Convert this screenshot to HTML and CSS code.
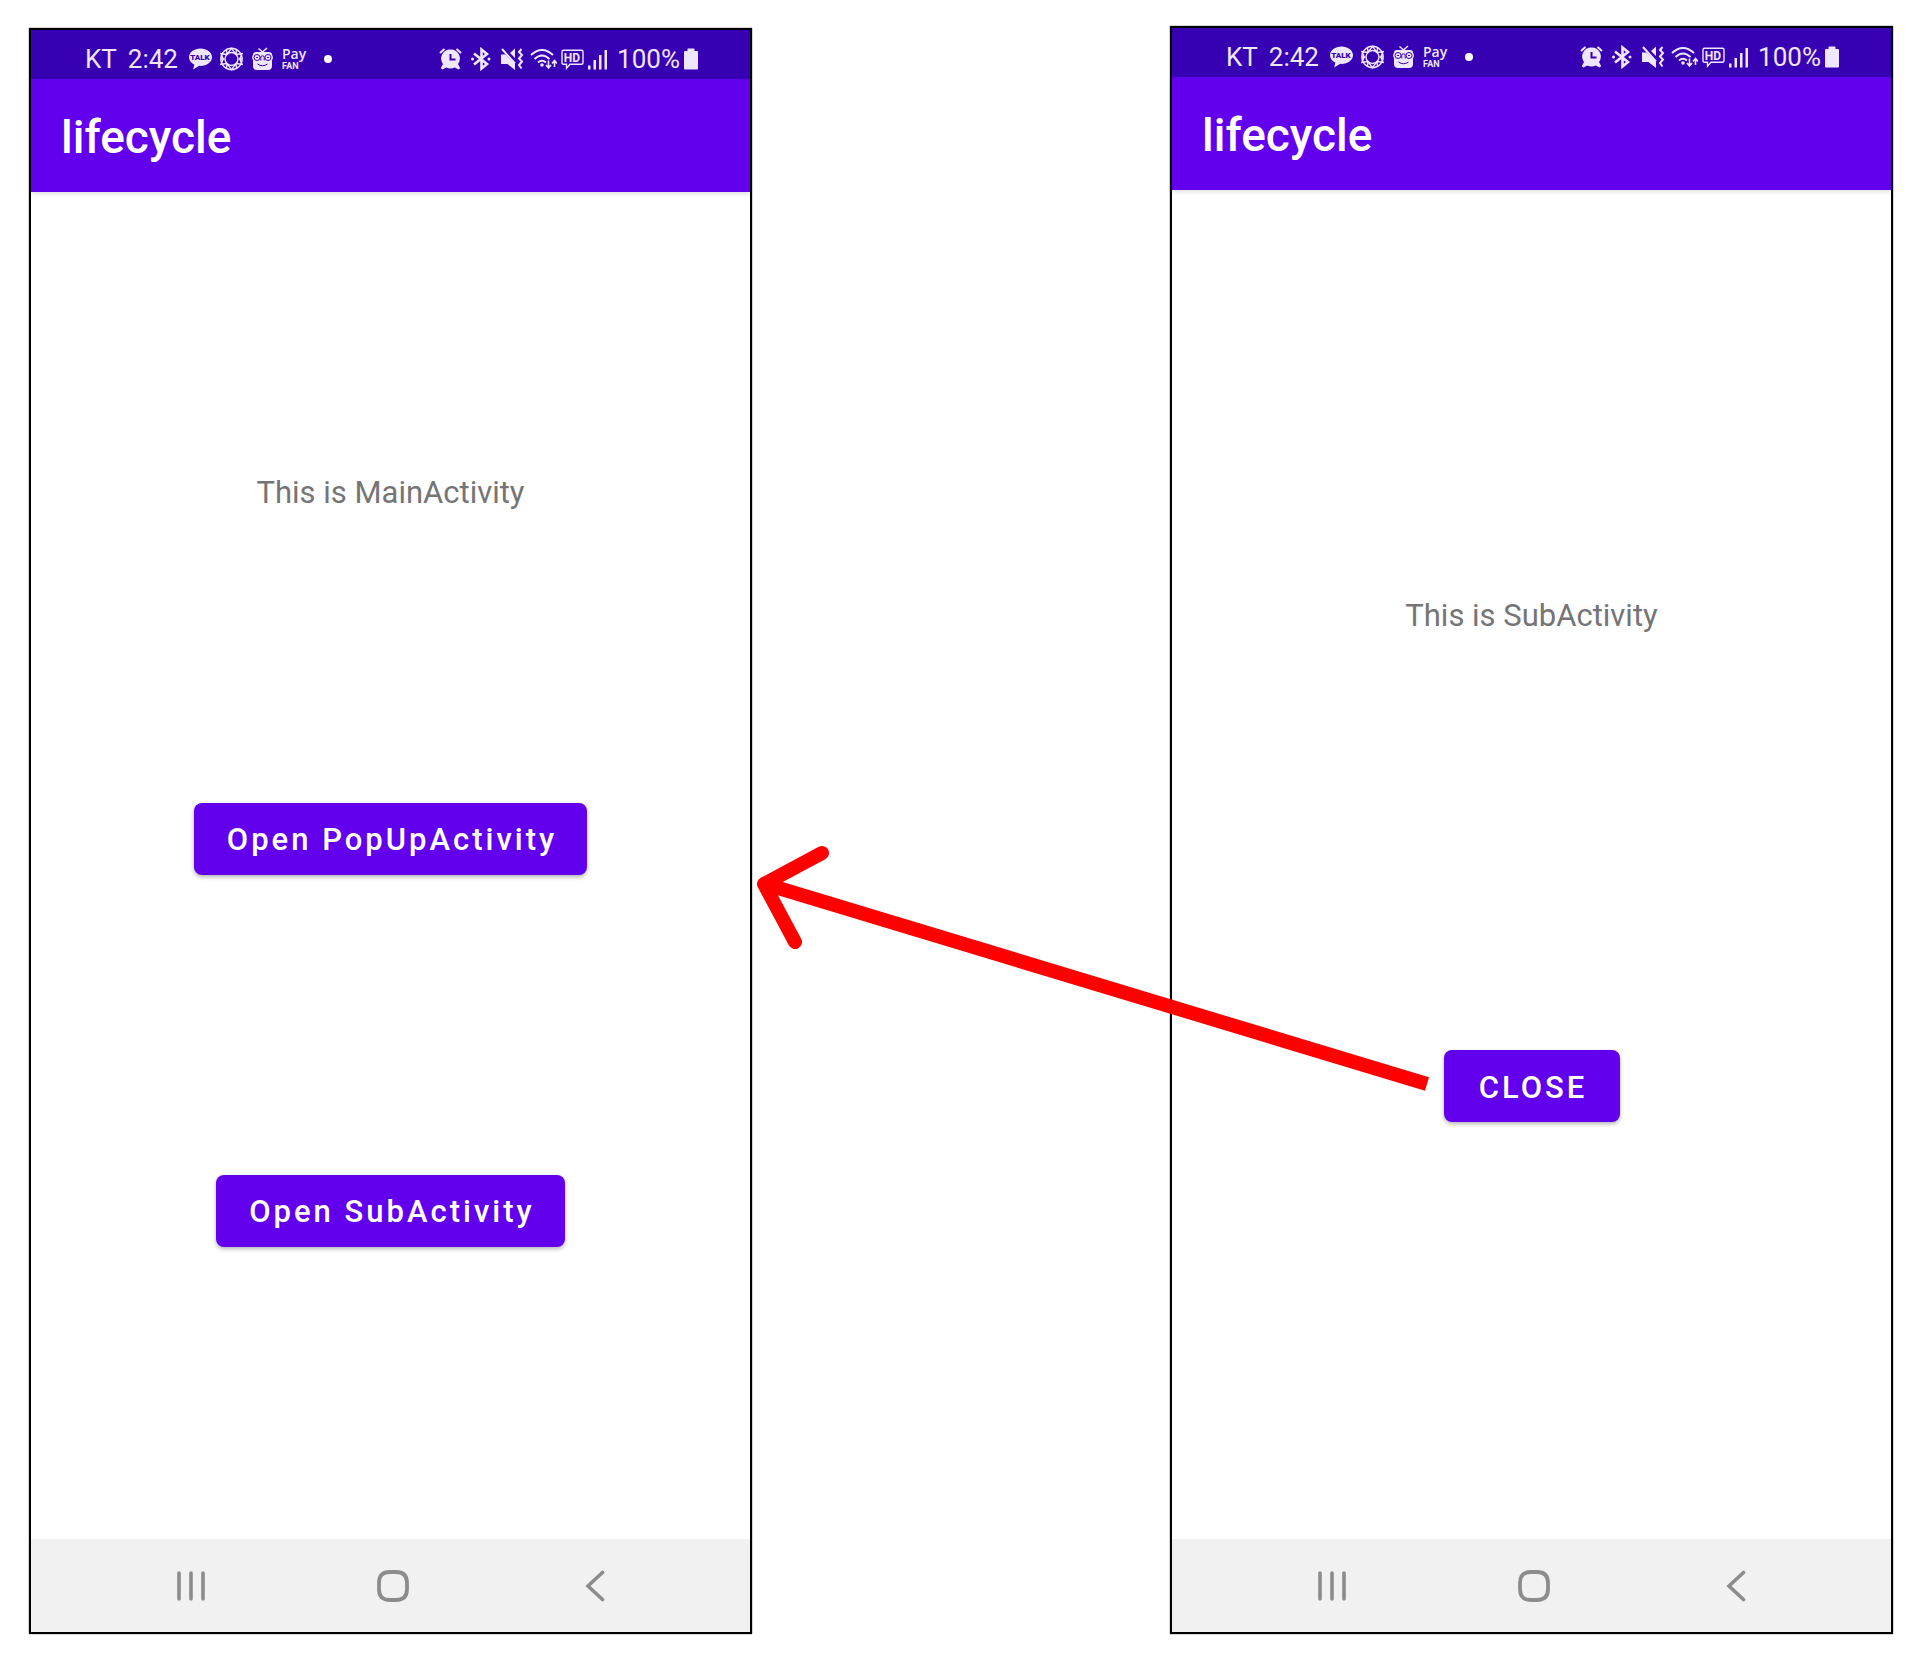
FILE: index.html
```html
<!DOCTYPE html>
<html lang="en">
<head>
<meta charset="utf-8">
<title>lifecycle</title>
<link rel="stylesheet" href="styles.css">
</head>
<body>
<svg class="sprite" aria-hidden="true">
  <symbol id="talk" viewBox="0 0 23 24">
    <path fill="currentColor" d="M11.500 1.500C5.200 1.500 0 5.300 0 10.200c0 3.200 2.100 5.900 5.300 7.400L4.200 22.500l6-3.700 1.300.1c6.300 0 11.500-3.900 11.500-8.700S17.800 1.500 11.500 1.500z"/>
  </symbol>
  <symbol id="ring" viewBox="0 0 23 24">
    <g fill="none" stroke="currentColor" stroke-width="1.400">
      <circle cx="11.500" cy="12" r="10.700"/>
      <circle cx="11.500" cy="12" r="6.500"/>
      <path d="M11.500 1.400L16 7.500l6-.8-2.300 5.300 2.300 5.300-6-.8-4.500 6.100L7 16.500l-6 .8L3.300 12 1 6.700l6 .8zM6.500 2.700l.5 4.800M16.500 2.700L16 7.500M6.500 21.300l.5-4.800M16.500 21.300l-.5-4.800M.9 12h3.500M18.600 12h3.500"/>
    </g>
  </symbol>
  <symbol id="face" viewBox="0 0 23 24">
    <path fill="none" stroke="currentColor" stroke-width="1.500" d="M7.500 1.500l4 3.500 4.500-4"/>
    <path fill="currentColor" d="M5 5h13q3 0 3 2.500l1 3-1 3V19q0 4-4 4H6q-4 0-4-4v-5.500l-1-3 1-3Q2 5 5 5z"/>
    <g class="face-lines" fill="none">
      <circle cx="6" cy="10.500" r="3"/><circle cx="17" cy="10.500" r="3"/>
      <path d="M9.800 13.500V9.500q1.700-1.500 3.400 0v4M6.500 17q5 3.500 10 0M5 10.500h2M16 10.500h2"/>
    </g>
  </symbol>
  <symbol id="alarm" viewBox="0 0 27 24">
    <path fill="none" stroke="currentColor" stroke-width="2" d="M1 6l4.500-4M22 6l-4.500-4"/>
    <path fill="currentColor" fill-rule="evenodd" d="M11.500 2.500a9 9 0 0 1 7.500 14.400l2.200 4.300-1.700 1.300-3.700-2a10 10 0 0 1-8.600 0l-3.700 2-1.700-1.300L4 16.900A9 9 0 0 1 11.500 2.500zM10.500 7v6.500h6v-2h-4V7z"/>
  </symbol>
  <symbol id="bluetooth" viewBox="0 0 26 24">
    <path fill="none" stroke="currentColor" stroke-width="2.600" d="M4 6.500l13 10.500-5.500 4.500v-19L17 7 4 17.500"/>
    <circle fill="currentColor" cx="2.500" cy="12" r="1.500"/><circle fill="currentColor" cx="19" cy="12" r="1.500"/>
  </symbol>
  <symbol id="mute" viewBox="0 0 26 24">
    <path fill="currentColor" d="M1 7.500h4.500l9.500 9.500v6L7.500 17H1zM10 6l5-4.500v9.500z"/>
    <path fill="none" stroke="currentColor" stroke-width="2" d="M2 2l13 14.500M21.500 2l-2.500 3 3 3-3 3.500 3 3-3 3.500 2.500 3.500"/>
  </symbol>
  <symbol id="wifi" viewBox="0 0 27 24">
    <g fill="none" stroke="currentColor" stroke-width="2">
      <path d="M1 8q11-10 22 0M4.500 12q7.500-7 15 0M8 15.500q4-3.500 8 0"/>
      <path stroke-width="1.600" d="M18.500 13.500v7M16 18l2.500 3 2.500-3M24.500 20v-6M22 16.500l2.500-3 2.500 3"/>
    </g>
    <circle fill="currentColor" cx="12" cy="18" r="1.800"/>
  </symbol>
  <symbol id="hd" viewBox="0 0 23 24">
    <path fill="none" stroke="currentColor" stroke-width="1.400" d="M2.500 3.200h18q1.500 0 1.500 1.500v11q0 1.500-1.500 1.500H9l-3.500 4v-4h-3Q1 17.200 1 15.700v-11q0-1.500 1.500-1.500z"/>
  </symbol>
  <symbol id="signal" viewBox="0 0 25 24">
    <path fill="currentColor" d="M0 18.500h2.500v4H0zM5.500 13H8v9.500H5.500zM11 8h2.500v14.500H11zM16.500 3H19v19.500h-2.500z"/>
  </symbol>
  <symbol id="battery" viewBox="0 0 14 24">
    <path fill="currentColor" d="M4 1.500h6q.5 0 .5.500v2H13q1 0 1 1v16.500q0 1-1 1H1q-1 0-1-1V5q0-1 1-1h2.500V2q0-.5.5-.5z"/>
  </symbol>
  <symbol id="recents" viewBox="0 0 32 32">
    <path fill="none" stroke="currentColor" stroke-width="3.600" stroke-linecap="round" d="M4 3v26M16 3v26M28 3v26"/>
  </symbol>
  <symbol id="home" viewBox="0 0 32 32">
    <path fill="none" stroke="currentColor" stroke-width="3.800" d="M16 2h3q11 0 11 11v6q0 11-11 11h-6Q2 30 2 19v-6Q2 2 13 2z"/>
  </symbol>
  <symbol id="back" viewBox="0 0 32 32">
    <path fill="none" stroke="currentColor" stroke-width="3.600" stroke-linecap="round" d="M23.500 2.500L9 16l14.500 13.500"/>
  </symbol>
</svg>

<main class="board">
  <section class="phone phone-main">
    <header>
      <div class="status">
        <div class="status-left">
          <span>KT</span><span>2:42</span>
          <svg class="w23"><use href="#talk"/><text class="talk-text" x="11" y="13" text-anchor="middle">TALK</text></svg>
          <svg class="w23"><use href="#ring"/></svg>
          <svg class="w23"><use href="#face"/></svg>
          <svg class="w26"><text class="pay-text" x="0" y="12">Pay</text><text class="fan-text" x="0" y="22">FAN</text></svg>
          <i class="dot"></i>
        </div>
        <div class="status-right">
          <svg class="w27"><use href="#alarm"/></svg>
          <svg class="w26"><use href="#bluetooth"/></svg>
          <svg class="w26"><use href="#mute"/></svg>
          <svg class="w27"><use href="#wifi"/></svg>
          <svg class="w23"><use href="#hd"/><text class="hd-text" x="11" y="15" text-anchor="middle">HD</text></svg>
          <svg class="w25"><use href="#signal"/></svg>
          <span>100%</span>
          <svg class="w14"><use href="#battery"/></svg>
        </div>
      </div>
      <h1 class="appbar">lifecycle</h1>
    </header>
    <div class="content">
      <p class="label">This is MainActivity</p>
      <button class="btn" type="button">Open PopUpActivity</button>
      <button class="btn" type="button">Open SubActivity</button>
    </div>
    <nav class="nav">
      <button type="button" aria-label="Recents"><svg><use href="#recents"/></svg></button>
      <button type="button" aria-label="Home"><svg><use href="#home"/></svg></button>
      <button type="button" aria-label="Back"><svg><use href="#back"/></svg></button>
    </nav>
  </section>

  <section class="phone">
    <header>
      <div class="status">
        <div class="status-left">
          <span>KT</span><span>2:42</span>
          <svg class="w23"><use href="#talk"/><text class="talk-text" x="11" y="13" text-anchor="middle">TALK</text></svg>
          <svg class="w23"><use href="#ring"/></svg>
          <svg class="w23"><use href="#face"/></svg>
          <svg class="w26"><text class="pay-text" x="0" y="12">Pay</text><text class="fan-text" x="0" y="22">FAN</text></svg>
          <i class="dot"></i>
        </div>
        <div class="status-right">
          <svg class="w27"><use href="#alarm"/></svg>
          <svg class="w26"><use href="#bluetooth"/></svg>
          <svg class="w26"><use href="#mute"/></svg>
          <svg class="w27"><use href="#wifi"/></svg>
          <svg class="w23"><use href="#hd"/><text class="hd-text" x="11" y="15" text-anchor="middle">HD</text></svg>
          <svg class="w25"><use href="#signal"/></svg>
          <span>100%</span>
          <svg class="w14"><use href="#battery"/></svg>
        </div>
      </div>
      <h1 class="appbar">lifecycle</h1>
    </header>
    <div class="content">
      <p class="label">This is SubActivity</p>
      <button class="btn" type="button">CLOSE</button>
    </div>
    <nav class="nav">
      <button type="button" aria-label="Recents"><svg><use href="#recents"/></svg></button>
      <button type="button" aria-label="Home"><svg><use href="#home"/></svg></button>
      <button type="button" aria-label="Back"><svg><use href="#back"/></svg></button>
    </nav>
  </section>

  <svg class="arrow" viewBox="0 0 1930 1664" aria-hidden="true">
    <g fill="none" stroke="#f00" stroke-width="14">
      <path d="M1427 1084L765 884"/>
      <path stroke-linecap="round" stroke-linejoin="round" d="M822 853l-58 31 31 58"/>
    </g>
  </svg>
</main>
</body>
</html>
```
FILE: styles.css
```css
* {
  box-sizing: border-box;
}

body {
  margin: 0;
  background: #fff;
  font-family: Roboto, "Liberation Sans", sans-serif;
}

.sprite {
  position: absolute;
  width: 0;
  height: 0;
}

.board {
  position: relative;
  display: grid;
  grid-template-columns: 1fr 1fr;
  column-gap: 418px;
  min-height: 100vh;
  padding: 26px 37px 30px 29px;
}

.phone {
  display: flex;
  flex-direction: column;
  border: 2px solid #000;
  box-shadow: 0 0 1px #000;
}

.phone-main {
  margin-top: 2px;
}

.status {
  display: flex;
  justify-content: space-between;
  align-items: center;
  height: 49px;
  padding: 8px 52px 0 54px;
  background: #3700b3;
  color: #efe6ff;
  font-size: 26px;
  line-height: 32px;
}

.status-left,
.status-right {
  display: flex;
  align-items: center;
}

.status-left {
  gap: 8px;
}

.status-left span {
  margin-right: 3px;
}

.status-right {
  gap: 4px;
}

.status svg {
  display: block;
  height: 24px;
  overflow: visible;
}

.w14 { width: 14px; }
.w23 { width: 23px; }
.w25 { width: 25px; }
.w26 { width: 26px; }
.w27 { width: 27px; }

.dot {
  width: 8px;
  height: 8px;
  margin-left: 8px;
  border-radius: 50%;
  background: #fff;
}

.talk-text {
  fill: #3700b3;
  font-size: 8px;
  font-weight: 900;
}

.face-lines {
  stroke: #3700b3;
  stroke-width: 1px;
}

.pay-text,
.fan-text,
.hd-text {
  fill: currentColor;
}

.pay-text {
  font: 600 14px/16px "Open Sans", sans-serif;
}

.fan-text {
  font-size: 9px;
  font-weight: 700;
}

.hd-text {
  font-size: 12px;
  font-weight: 700;
}

.appbar {
  margin: 0;
  padding: 3px 30px 0;
  background: #6200ee;
  box-shadow: 0 2px 4px rgba(0, 0, 0, 0.12);
  color: #fff;
  font-size: 46px;
  font-weight: 500;
  line-height: 110px;
}

.content {
  flex: 1;
  display: flex;
  flex-direction: column;
  align-items: center;
  justify-content: space-evenly;
}

.label {
  margin: 0;
  color: #757575;
  font-size: 31px;
  line-height: 34px;
}

.btn {
  min-width: 176px;
  height: 72px;
  margin: 8px 0;
  padding: 3px 30px 0 33px;
  border: 0;
  border-radius: 8px;
  background: #6200ee;
  box-shadow: 0 2px 4px rgba(0, 0, 0, 0.3);
  color: #fff;
  font: 500 31px/36px Roboto, "Liberation Sans", sans-serif;
  letter-spacing: 3px;
}

.nav {
  display: grid;
  grid-template-columns: repeat(3, 1fr);
  height: 93px;
  padding: 0 54px 0 59px;
  background: #f1f1f1;
}

.nav button {
  display: flex;
  align-items: center;
  justify-content: center;
  padding: 0;
  border: 0;
  background: none;
  color: #8c8c8c;
}

.nav svg {
  width: 32px;
  height: 32px;
}

.arrow {
  position: absolute;
  inset: 0;
  width: 100%;
  height: 100%;
  pointer-events: none;
}
```
